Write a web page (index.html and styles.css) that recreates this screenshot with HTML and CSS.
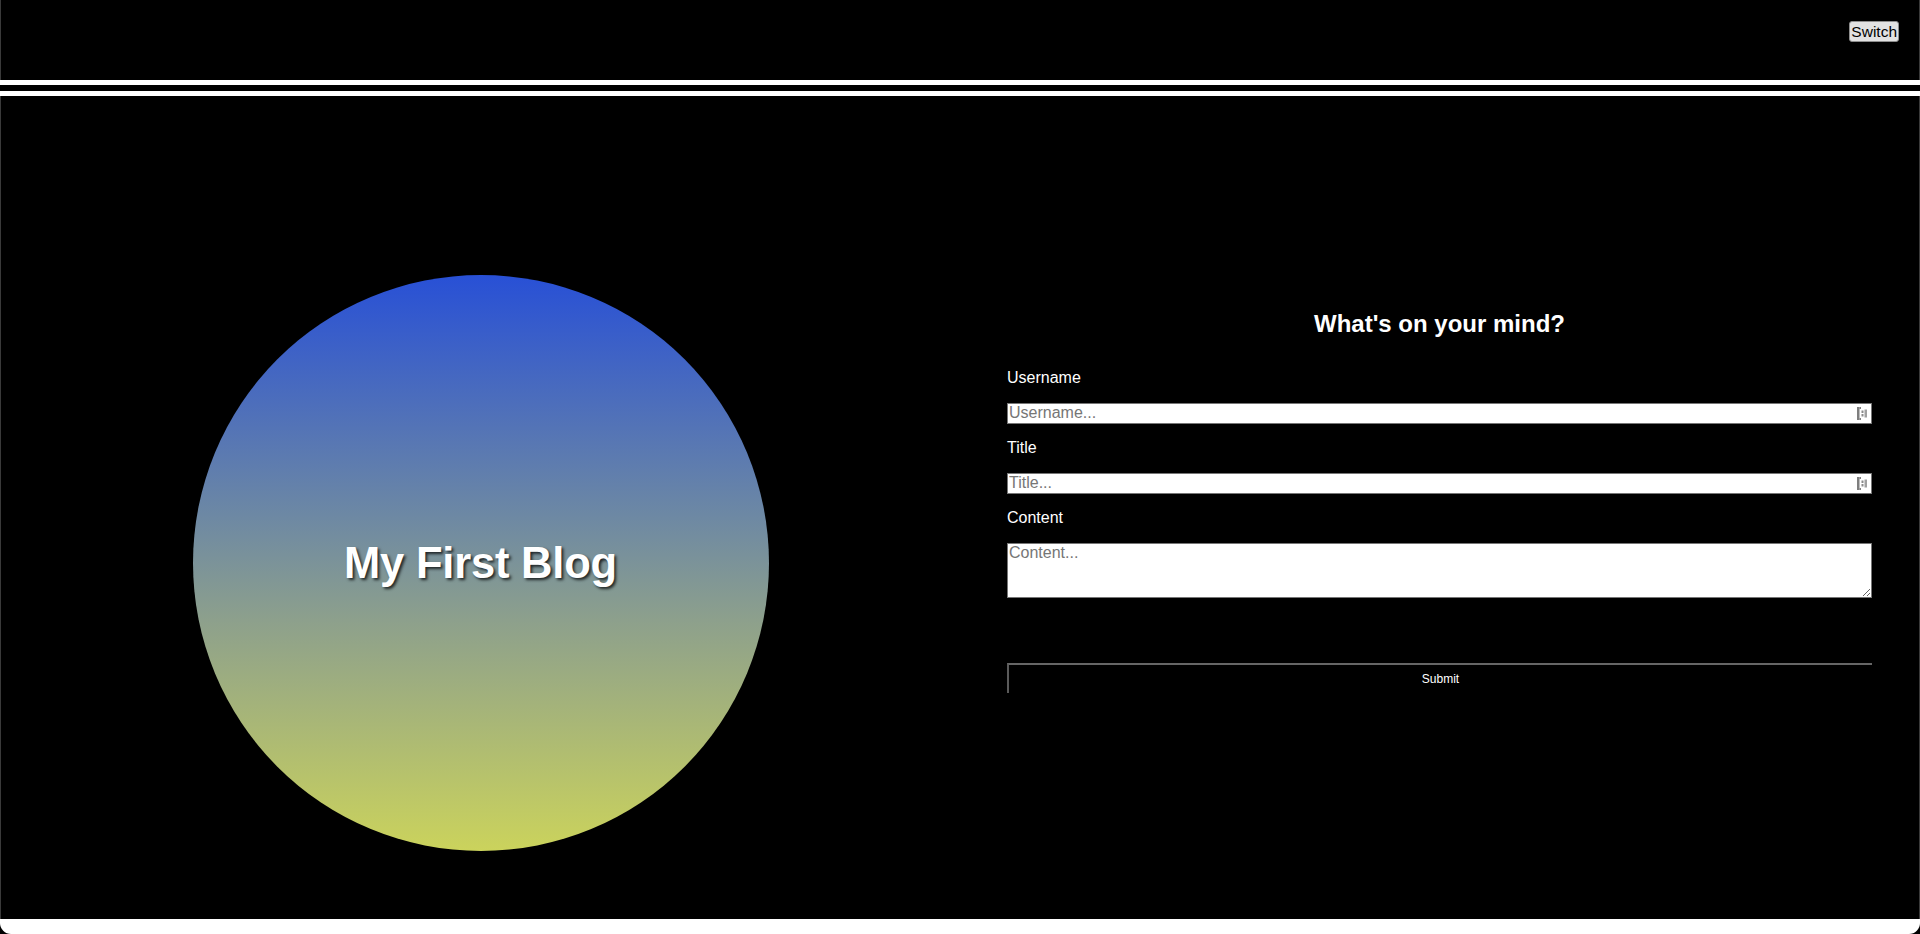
FILE: index.html
```html
<!DOCTYPE html>
<html lang="en">
<head>
<meta charset="utf-8">
<title>My First Blog</title>
<link rel="stylesheet" href="styles.css">
</head>
<body>
<div class="window">
  <header class="header">
    <button class="switch" type="button">Switch</button>
  </header>
  <div class="divider"></div>
  <div class="viewport">
    <main class="main">
      <section class="hero-col">
        <div class="circle">
          <h1 class="blog-title">My First Blog</h1>
        </div>
      </section>
      <section class="form-col">
        <form class="post-form">
          <h2 class="form-title">What's on your mind?</h2>
          <label class="label" for="username">Username</label>
          <div class="field">
            <input class="input" id="username" type="text" placeholder="Username...">
            <svg class="autofill" viewBox="0 0 10 13" width="10" height="13" aria-hidden="true">
              <rect x="0" y="0" width="2.5" height="13" fill="#7e7e7e"/>
              <rect x="2.5" y="0" width="1.5" height="2" fill="#7e7e7e"/>
              <rect x="2.5" y="11" width="1.5" height="2" fill="#7e7e7e"/>
              <rect x="4.5" y="3.5" width="2" height="2.5" fill="#8a8a8a"/>
              <rect x="4.5" y="7" width="2" height="2.5" fill="#8a8a8a"/>
              <rect x="7.5" y="2.5" width="2.5" height="8" fill="#a0a0a0"/>
            </svg>
          </div>
          <label class="label" for="title">Title</label>
          <div class="field">
            <input class="input" id="title" type="text" placeholder="Title...">
            <svg class="autofill" viewBox="0 0 10 13" width="10" height="13" aria-hidden="true">
              <rect x="0" y="0" width="2.5" height="13" fill="#7e7e7e"/>
              <rect x="2.5" y="0" width="1.5" height="2" fill="#7e7e7e"/>
              <rect x="2.5" y="11" width="1.5" height="2" fill="#7e7e7e"/>
              <rect x="4.5" y="3.5" width="2" height="2.5" fill="#8a8a8a"/>
              <rect x="4.5" y="7" width="2" height="2.5" fill="#8a8a8a"/>
              <rect x="7.5" y="2.5" width="2.5" height="8" fill="#a0a0a0"/>
            </svg>
          </div>
          <label class="label" for="content">Content</label>
          <textarea class="textarea" id="content" placeholder="Content..."></textarea>
          <button class="submit" type="submit">Submit</button>
        </form>
      </section>
    </main>
  </div>
  <div class="window-bottom"></div>
</div>
</body>
</html>
```

FILE: styles.css
```css
html, body {
  margin: 0;
  padding: 0;
  height: 100%;
  background: #000;
  overflow: hidden;
  font-family: "Liberation Sans", Arial, Helvetica, sans-serif;
}

.window {
  height: 100vh;
  display: flex;
  flex-direction: column;
}

.header {
  height: 80px;
  box-sizing: border-box;
  padding: 21px 20px 0 0;
  display: flex;
  justify-content: flex-end;
  align-items: flex-start;
  background: #000;
  border-left: 1px solid #3a3a3a;
  border-right: 1px solid #3a3a3a;
  flex: none;
}

.switch {
  font-family: "Liberation Sans", Arial, Helvetica, sans-serif;
  font-size: 15.5px;
  height: 21px;
  line-height: 19px;
  padding: 0 1px;
  color: #000;
  background: #e2e2e2;
  border: 1px solid #8d8d8d;
  border-radius: 3px;
}

.divider {
  height: 6px;
  background: #000;
  border-top: 5px solid #fff;
  border-bottom: 5px solid #fff;
  flex: none;
}

.viewport {
  flex: 1;
  overflow: hidden;
  background: #000;
  border-left: 1px solid #3a3a3a;
  border-right: 1px solid #3a3a3a;
}

.main {
  height: 934px;
  display: grid;
  grid-template-columns: 1fr 1fr;
  align-items: center;
}

.hero-col {
  display: flex;
  justify-content: center;
}

.circle {
  width: 576px;
  height: 576px;
  border-radius: 50%;
  background: linear-gradient(to bottom, #2850d6 0%, #6a86a6 40%, #8da08c 60%, #cbd35c 100%);
  display: flex;
  align-items: center;
  justify-content: center;
}

.blog-title {
  margin: 0;
  color: #fff;
  font-size: 43.5px;
  font-weight: bold;
  letter-spacing: -0.2px;
  text-shadow: 2px 2px 3px rgba(0, 0, 0, 0.75);
}

.form-col {
  display: flex;
  justify-content: center;
  padding-bottom: 125px;
}

.post-form {
  width: 865px;
  display: flex;
  flex-direction: column;
  color: #fff;
}

.form-title {
  margin: 1.5px 0 30.5px;
  font-size: 24px;
  font-weight: bold;
  text-align: center;
  line-height: normal;
}

.label {
  font-size: 16px;
  line-height: normal;
  margin-bottom: 16px;
}

.field {
  position: relative;
  margin-bottom: 15px;
}

.input {
  display: block;
  width: 100%;
  height: 21px;
  box-sizing: border-box;
  margin: 0;
  padding: 0 1px;
  font-family: "Liberation Sans", Arial, Helvetica, sans-serif;
  font-size: 16px;
  color: #000;
  background: #fff;
  border: 1px solid #767676;
  outline: none;
}

.input::placeholder,
.textarea::placeholder {
  color: #767676;
}

.autofill {
  position: absolute;
  right: 5px;
  top: 4px;
}

.textarea {
  display: block;
  width: 100%;
  height: 55px;
  box-sizing: border-box;
  margin: 0 0 65px;
  padding: 0 1px;
  font-family: "Liberation Sans", Arial, Helvetica, sans-serif;
  font-size: 16px;
  background: #fff;
  border: 1px solid #767676;
  resize: both;
}

.submit {
  height: 30px;
  width: 100%;
  margin: 0;
  padding: 0;
  font-family: "Liberation Sans", Arial, Helvetica, sans-serif;
  font-size: 12px;
  color: #fff;
  background: #000;
  border-style: solid;
  border-width: 2px 0 0 2px;
  border-color: #666 #000 #000 #5a5a5a;
}

.window-bottom {
  height: 15px;
  flex: none;
  background: #fff;
  border-radius: 0 0 11px 11px;
}
```
